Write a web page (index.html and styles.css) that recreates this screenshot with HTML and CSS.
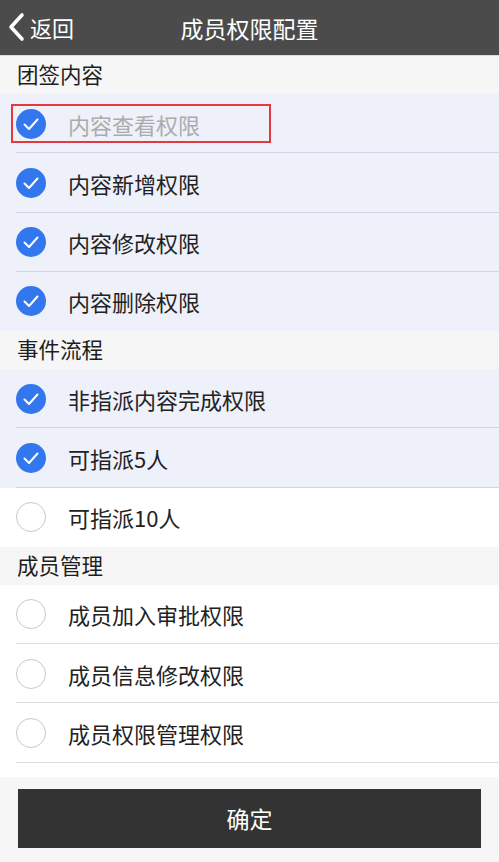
FILE: index.html
```html
<!DOCTYPE html>
<html lang="zh-CN">
<head>
    <meta charset="UTF-8">
    <meta name="viewport" content="width=device-width, initial-scale=1.0">
    <title>成员权限配置</title>
    <link rel="stylesheet" href="styles.css">
</head>
<body>
    <header class="topbar">
        <a class="back" href="#">
            <svg width="18" height="30" viewBox="0 0 18 30"><path d="M15 3 L4 15 L15 27" fill="none" stroke="#fff" stroke-width="3.6" stroke-linecap="round" stroke-linejoin="round"/></svg>
            <span>返回</span>
        </a>
        <h1 class="title">成员权限配置</h1>
    </header>

    <div class="list">
        <div class="group-title">团签内容</div>
        <div class="row checked disabled">
            <span class="mark"><span class="box"></span><span class="label">内容查看权限</span></span>
        </div>
        <div class="row checked"><span class="box"></span><span class="label">内容新增权限</span></div>
        <div class="row checked"><span class="box"></span><span class="label">内容修改权限</span></div>
        <div class="row checked last"><span class="box"></span><span class="label">内容删除权限</span></div>

        <div class="group-title">事件流程</div>
        <div class="row checked"><span class="box"></span><span class="label">非指派内容完成权限</span></div>
        <div class="row checked"><span class="box"></span><span class="label">可指派5人</span></div>
        <div class="row last"><span class="box"></span><span class="label">可指派10人</span></div>

        <div class="group-title">成员管理</div>
        <div class="row"><span class="box"></span><span class="label">成员加入审批权限</span></div>
        <div class="row"><span class="box"></span><span class="label">成员信息修改权限</span></div>
        <div class="row"><span class="box"></span><span class="label">成员权限管理权限</span></div>
        <div class="list-end"></div>
    </div>

    <div class="footer">
        <button class="confirm">确定</button>
    </div>
</body>
</html>
```

FILE: styles.css
```css
body {
    margin: 0;
    font-family: "Noto Sans CJK SC", "Noto Sans", sans-serif;
    background: #f6f6f6;
    color: #222;
}

.topbar {
    height: 56px;
    background: #4b4b4b;
    display: flex;
    align-items: center;
    justify-content: center;
    position: relative;
    border-bottom: 1px solid #dcdcdc;
    box-sizing: border-box;
}

.back {
    position: absolute;
    left: 7px;
    top: 12px;
    display: flex;
    align-items: center;
    gap: 5px;
    color: #fff;
    text-decoration: none;
    font-size: 22px;
}

.back span {
    line-height: 30px;
}

.title {
    margin: 0;
    color: #fff;
    font-size: 23px;
    font-weight: normal;
}

.group-title {
    height: 38px;
    line-height: 36px;
    padding-left: 17px;
    font-size: 21.5px;
    background: #f6f6f6;
    color: #1e1e1e;
}

.row {
    height: 59.25px;
    box-sizing: border-box;
    display: flex;
    align-items: center;
    padding-left: 16px;
    background: #fff;
    position: relative;
}

.row::after {
    content: "";
    position: absolute;
    left: 16px;
    right: 0;
    bottom: 0;
    height: 1px;
    background: #dedede;
}

.row.checked {
    background: #eef0fa;
}

.row.checked::after {
    background: #d3d6e2;
}

.row.last::after {
    display: none;
}

.box {
    width: 30px;
    height: 30px;
    border-radius: 50%;
    border: 1.5px solid #c9c9c9;
    box-sizing: border-box;
    flex-shrink: 0;
    background: #fff;
}

.checked .box {
    border: none;
    background: #3277ee url("data:image/svg+xml;utf8,<svg xmlns='http://www.w3.org/2000/svg' width='30' height='30' viewBox='0 0 30 30'><path d='M8.5 15.5 L13 20 L21.5 10.5' fill='none' stroke='white' stroke-width='2' stroke-linecap='round' stroke-linejoin='round'/></svg>") center / 30px no-repeat;
}

.label {
    margin-left: 22px;
    font-size: 22px;
}

.mark {
    display: flex;
    align-items: center;
    margin-left: -5px;
    width: 253px;
    height: 35px;
    padding-left: 3px;
    border: 2px solid #e23a3f;
}

.disabled .label {
    color: #ababab;
}

.list-end {
    height: 14px;
    background: #fff;
}

.footer {
    padding: 12px 18px 13px;
}

.confirm {
    display: block;
    width: 100%;
    height: 59px;
    border: none;
    background: #333;
    color: #fff;
    font-family: inherit;
    font-size: 23px;
    cursor: pointer;
}
```
